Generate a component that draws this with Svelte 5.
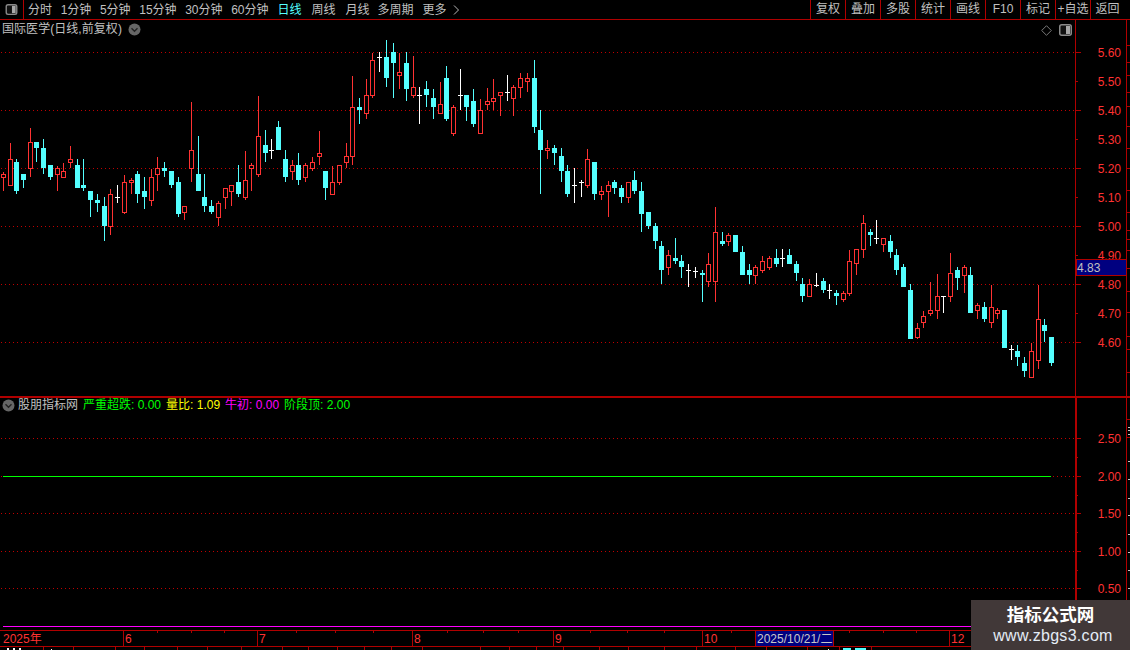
<script>
  const periods = [
    { label: '分时' }, { label: '1分钟', num: true }, { label: '5分钟', num: true }, { label: '15分钟', num: true },
    { label: '30分钟', num: true }, { label: '60分钟', num: true }, { label: '日线', active: true },
    { label: '周线', wide: true }, { label: '月线', wide: true }, { label: '多周期', tight: true }, { label: '更多' }
  ];
  const actions = ['复权','叠加','多股','统计','画线','F10','标记','+自选','返回'];

  // [x, high, bodyTop, bodyBottom, low, kind] in 3x crop units: r red, c cyan, w white doji
  const groups = [
    { ox: 0, oy: 90, rows: `10 r 247 252 263 303|31 r 159 207 288 288|49 c 207 216 303 312|70 c 252 252 270 294|91 r 114 156 237 261|109 c 156 156 174 216|130 c 147 174 234 252|151 c 225 225 261 270|172 r 228 234 255 303|190 r 219 243 264 264|211 r 168 207 219 234|232 c 207 225 294 294|250 c 207 285 294 303|271 c 303 303 330 381|292 c 312 330 339 366|313 c 321 348 408 453|331 r 297 312 411 435|352 w 285 322 322 339|373 r 255 276 369 372|394 r 264 270 279 312|412 c 243 252 312 339|433 c 261 303 321 357|454 r 237 261 333 348|472 r 201 234 255 303|493 c 216 234 243 261|514 c 243 243 285 294|535 c 261 276 372 381|553 r 348 348 369 390|574 r 36 180 237 276|595 c 138 252 303 303|613 c 252 321 348 366|634 c 330 348 366 372|655 r 333 339 384 408|676 r 294 294 324 357|694 r 285 285 306 348|715 c 225 276 312 321|736 r 183 270 324 330|754 r 219 225 237 303|775 r 18 138 255 261|796 c 120 165 189 216|814 w 147 181 181 207|835 c 93 111 180 180` },
    { ox: 280, oy: 30, rows: `16 c 360 387 441 456|37 r 390 405 426 450|55 c 369 405 450 465|76 r 399 405 444 456|97 r 381 396 417 423|118 r 303 369 381 405|136 c 423 423 474 510|157 r 408 456 495 495|178 r 405 405 459 465|199 r 339 378 399 414|217 r 138 231 381 405|238 c 204 231 240 282|259 r 147 195 252 267|277 r 69 90 198 204|298 w 66 82 82 126|319 c 30 81 144 171|340 c 39 66 99 204|358 r 69 126 138 177|379 c 66 99 177 213|400 r 78 171 198 204|418 w 171 196 196 282|439 c 153 177 195 231|460 c 177 204 231 267|481 r 156 222 252 252|499 c 108 144 267 273|520 r 225 231 312 318|541 w 117 196 196 240|559 c 195 195 231 273|580 c 177 213 282 291|601 r 207 240 312 312|622 r 174 213 225 240|640 r 147 204 216 240|661 r 186 186 198 258|682 w 135 187 187 213|700 r 165 171 207 258|721 r 129 144 174 204|742 r 129 144 156 186|763 c 90 144 291 309|781 c 240 300 360 492` },
    { ox: 530, oy: 130, rows: `52 r 30 54 63 87|73 c 45 54 69 105|94 c 54 78 123 156|112 c 105 123 192 201|133 w 114 166 166 219|154 w 150 157 157 201|172 r 57 87 168 174|193 c 96 96 192 210|214 r 168 183 195 210|235 r 153 165 186 261|253 c 150 156 174 192|274 c 165 174 201 219|295 r 156 156 204 219|313 c 123 150 183 192|334 c 156 183 252 306|355 c 246 246 288 297|376 c 279 288 333 357|394 c 333 348 420 462|415 r 360 375 414 435|436 c 324 384 393 402|454 c 375 393 411 444|475 w 402 421 421 471|496 w 411 423 423 444|517 c 420 429 435 516|535 r 369 402 456 471|556 r 231 306 456 516|577 c 306 333 342 348|595 r 309 315 336 348|616 c 315 315 366 366|637 c 348 366 435 435|658 c 402 420 435 462|676 r 405 411 438 462|697 r 378 393 423 429|718 r 378 384 414 420|739 c 357 384 402 411|757 w 357 385 385 411|778 c 357 375 402 402|799 c 393 402 429 453` },
    { ox: 780, oy: 200, rows: `67 c 234 252 288 306|88 r 237 252 291 291|109 w 219 255 255 261|130 c 234 243 270 279|148 w 252 270 270 297|169 c 270 279 288 315|190 r 273 279 300 306|208 r 150 183 282 288|229 r 147 147 192 225|250 r 45 69 150 174|271 c 87 96 105 138|289 w 60 115 115 132|310 r 114 114 135 156|331 c 105 123 156 174|349 c 147 165 210 225|370 c 192 201 261 261|391 c 252 270 417 417|412 r 369 384 414 417|430 r 333 348 369 384|451 r 246 330 342 348|472 r 222 288 333 357|490 w 288 288 288 339|511 r 159 219 291 306|532 c 201 210 234 270|553 r 195 201 228 279|571 c 201 225 339 339|592 r 309 315 333 357|613 c 306 321 357 366|634 r 255 321 369 384|652 r 324 330 342 357|673 c 330 330 444 444|694 w 435 447 447 480|712 c 435 453 471 498|733 c 471 489 513 531|754 r 429 453 534 534|775 r 255 357 483 507|793 c 357 375 393 426|814 c 411 411 489 498` }
  ];

  const candles = groups.flatMap(({ ox, oy, rows }) =>
    rows.split('|').map((row) => {
      const [z, kind, hi, top, bot, lo] = row.split(' ');
      const y = (v) => Math.round(oy + +v / 3);
      return { x: Math.floor(ox + +z / 3), kind, hi: y(hi), top: y(top), bot: y(bot), lo: y(lo) };
    })
  );

  const priceLabels = [
    ['5.60', 52, 1], ['5.50', 81, 0], ['5.40', 110, 1], ['5.30', 139, 0], ['5.20', 168, 1], ['5.10', 197, 0],
    ['5.00', 226, 1], ['4.90', 255, 0], ['4.80', 284, 1], ['4.70', 313, 0], ['4.60', 342, 1]
  ];
  const lowerLabels = [['2.50', 438], ['2.00', 476], ['1.50', 513], ['1.00', 551], ['0.50', 588]];
  const lowerMinor = [457, 495, 532, 570];
  const topStrip = [45, 62, 75, 92, 106, 126, 148, 168, 190, 212, 230, 239, 250, 268, 291, 312, 336, 349, 372];
  const lowerStrip = [427, 430, 434, 461, 479, 498, 515, 534, 552, 570, 588, 606];

  const timeMarks = [
    { x: 123, label: '6' }, { x: 257, label: '7' }, { x: 412, label: '8' },
    { x: 553, label: '9' }, { x: 702, label: '10' }, { x: 949, label: '12' }
  ];
  const timeTicks = [157, 191, 224, 296, 335, 373, 447, 483, 518, 590, 627, 664, 731, 849, 883, 916];
  const statusCells = [43, 73, 115, 144, 177, 207, 241, 282, 308, 337, 364, 391, 422, 480, 509, 536, 563, 599, 628, 664, 696, 735, 766, 807, 839, 871];
</script>

{#snippet chevronBadge()}
  <svg class="badge" width="13" height="13" viewBox="0 0 13 13" aria-hidden="true">
    <circle cx="6.5" cy="6.5" r="6" fill="#666" />
    <path d="M3.5 5.2 L6.5 8.2 L9.5 5.2" fill="none" stroke="#222" stroke-width="1.4" />
  </svg>
{/snippet}

{#snippet splitIcon(w, h)}
  <svg width={w} height={h} viewBox="0 0 13 12" aria-hidden="true">
    <rect x="0.75" y="0.75" width="11.5" height="10.5" rx="2" fill="#111" stroke="#8a8a8a" stroke-width="1.5" />
    <rect x="7" y="2" width="4" height="8" fill="#a8a8a8" />
  </svg>
{/snippet}

<div class="terminal">
  <header class="toolbar">
    <div class="toggle">{@render splitIcon(13, 11)}</div>
    <nav class="periods">
      {#each periods as p}
        <span class:active={p.active} class:num={p.num} class:wide={p.wide} class:tight={p.tight}>{p.label}</span>
      {/each}
      <svg class="more" width="7" height="12" viewBox="0 0 7 12" aria-hidden="true">
        <path d="M1 1.5 L5.5 6 L1 10.5" fill="none" stroke="#b8b8b8" stroke-width="1" />
      </svg>
    </nav>
    <div class="actions">
      {#each actions as a}<span>{a}</span>{/each}
    </div>
  </header>

  <section class="pane price-pane">
    <svg class="chart" width="1130" height="376" viewBox="0 20 1130 376" shape-rendering="crispEdges">
      {#each priceLabels.filter((l) => l[2]) as [, y]}
        <line class="grid" x1="1" x2="1075" y1={y + 0.5} y2={y + 0.5} />
      {/each}

      {#each candles as c}
        {#if c.kind === 'w'}
          <rect class="white" x={c.x} y={c.hi} width="1" height={c.lo - c.hi} />
          <rect class="white" x={c.x - 2} y={c.top} width="5" height="1" />
        {:else if c.kind === 'c'}
          <rect class="cyan" x={c.x} y={c.hi} width="1" height={c.lo - c.hi} />
          <rect class="cyan" x={c.x - 2} y={c.top} width="5" height={c.bot - c.top} />
        {:else}
          <rect class="red" x={c.x} y={c.hi} width="1" height={c.top - c.hi} />
          <rect class="red" x={c.x} y={c.bot} width="1" height={c.lo - c.bot} />
          <rect class="hollow" x={c.x - 1.5} y={c.top + 0.5} width="4" height={c.bot - c.top - 1} />
        {/if}
      {/each}

      <line class="axis" x1="1075.5" x2="1075.5" y1="20" y2="396" />
      <line class="axis" x1="1126.5" x2="1126.5" y1="20" y2="396" />
      {#each topStrip as y}
        <line class="axis" x1="1127" x2="1130" y1={y + 0.5} y2={y + 0.5} />
      {/each}
      {#each priceLabels as [label, y, major]}
        <line class="axis" x1="1076" x2={major ? 1081 : 1078} y1={y + 0.5} y2={y + 0.5} />
        <text class="scale" x="1121" y={y + 5}>{label}</text>
      {/each}

      <rect class="cursor" x="1076" y="259.5" width="50" height="16" />
      <text class="cursor-text" x="1077" y="272">4.83</text>
    </svg>

    <div class="title">国际医学(日线,前复权) {@render chevronBadge()}</div>
    <div class="tools">
      <svg width="11" height="11" viewBox="0 0 11 11" aria-hidden="true">
        <path d="M5.5 0.7 L10.3 5.5 L5.5 10.3 L0.7 5.5 Z" fill="none" stroke="#7a7a7a" />
      </svg>
      {@render splitIcon(13, 12)}
    </div>
  </section>

  <section class="pane lower-pane">
    <svg class="chart" width="1130" height="234" viewBox="0 396 1130 234" shape-rendering="crispEdges">
      <rect class="divider" x="0" y="396" width="1130" height="2" />
      {#each lowerLabels as [, y]}
        <line class="grid" x1="1" x2="1075" y1={y + 0.5} y2={y + 0.5} />
      {/each}
      <rect class="signal" x="3" y="476" width="1048" height="1" />
      <rect class="pulse" x="3" y="626" width="1127" height="1" />

      <rect class="divider" x="1075" y="396" width="2" height="234" />
      <line class="axis" x1="1126.5" x2="1126.5" y1="396" y2="630" />
      <line class="axis" x1="1127" x2="1130" y1="419.5" y2="419.5" />
      <line class="axis" x1="1127" x2="1130" y1="437.5" y2="437.5" />
      {#each lowerStrip as y}
        <line class="tick-white" x1="1128" x2="1130" y1={y + 0.5} y2={y + 0.5} />
      {/each}
      {#each lowerMinor as y}
        <line class="axis" x1="1077" x2="1078" y1={y + 0.5} y2={y + 0.5} />
      {/each}
      {#each lowerLabels as [label, y]}
        <line class="axis" x1="1077" x2="1081" y1={y + 0.5} y2={y + 0.5} />
        <text class="scale" x="1121" y={y + 5}>{label}</text>
      {/each}
    </svg>

    <div class="legend">
      {@render chevronBadge()}
      <span class="name">股朋指标网</span>
      <span class="green">严重超跌: 0.00</span>
      <span class="yellow">量比: 1.09</span>
      <span class="magenta">牛初: 0.00</span>
      <span class="green">阶段顶: 2.00</span>
    </div>
  </section>

  <svg class="timeline" width="1130" height="20" viewBox="0 630 1130 20" shape-rendering="crispEdges">
    <rect class="divider" x="0" y="630" width="1130" height="1" />
    <rect class="divider" x="0" y="646" width="1130" height="1" />
    {#each timeTicks as x}
      <rect class="divider" x={x} y="631" width="1" height="2" />
    {/each}
    <text class="time" x="3" y="643">2025年</text>
    {#each timeMarks as m}
      <rect class="divider" x={m.x} y="631" width="1" height="15" />
      <text class="time" x={m.x + 2} y="643">{m.label}</text>
    {/each}
    <rect class="date-box" x="755.5" y="630.5" width="78" height="16" />
    <text class="date" x="757" y="643">2025/10/21/二</text>
    {#each statusCells as x}
      <rect class="divider" x={x} y="647" width="1" height="3" />
    {/each}
    <rect class="tick-fill" x="7" y="648" width="2" height="2" />
    <rect class="tick-fill" x="13" y="648" width="2" height="2" />
    <rect class="tick-fill" x="19" y="648" width="2" height="2" />
    <rect class="tick-fill" x="51" y="649" width="1" height="1" />
    <rect class="tick-fill" x="828" y="649" width="1" height="1" />
    <rect class="cyan" x="843" y="648" width="8" height="2" />
    <rect class="cyan" x="855" y="648" width="11" height="2" />
  </svg>

  <aside class="watermark">
    <strong>指标公式网</strong>
    <span>www.zbgs3.com</span>
  </aside>
</div>

<style>
  :global(body) {
    margin: 0;
    background: #000;
  }

  .terminal {
    position: relative;
    width: 1130px;
    height: 650px;
    overflow: hidden;
    background: #000;
    color: #c0c0c0;
    font: 12px/16px "Liberation Sans", "Noto Sans CJK SC", sans-serif;
  }

  .toolbar {
    display: flex;
    height: 19px;
    border-bottom: 1px solid #b00000;
  }

  .toggle {
    display: flex;
    align-items: center;
    justify-content: center;
    box-sizing: border-box;
    width: 24px;
    padding-right: 1px;
    border-right: 1px solid #b00000;
  }

  .periods {
    display: flex;
    align-items: center;
    gap: 9px;
    padding-left: 4px;
  }

  .periods .active {
    color: #54ffff;
  }

  .periods .num {
    margin-left: -0.4px;
  }

  .periods .wide {
    margin-left: 1px;
  }

  .periods .tight {
    margin-left: -1px;
  }

  .more {
    margin-left: -3px;
  }

  .actions {
    display: flex;
    margin-left: auto;
    width: 320px;
  }

  .actions span {
    box-sizing: border-box;
    width: 35px;
    border-left: 1px solid #b00000;
    text-align: center;
    line-height: 19px;
    white-space: nowrap;
  }

  .actions span:last-child {
    width: 40px;
    padding-right: 6px;
  }

  .pane {
    position: relative;
  }

  .price-pane {
    height: 376px;
  }

  .lower-pane {
    height: 234px;
  }

  .chart,
  .timeline {
    display: block;
  }

  .title {
    position: absolute;
    top: 1px;
    left: 2px;
    display: flex;
    align-items: center;
    gap: 6px;
    line-height: 16px;
    letter-spacing: 0.05px;
  }

  .badge {
    display: block;
    flex: none;
  }

  .tools {
    position: absolute;
    top: 4px;
    right: 58px;
    display: flex;
    align-items: center;
    gap: 7px;
  }

  .tools svg {
    display: block;
  }

  .legend {
    position: absolute;
    top: 1px;
    left: 2px;
    display: flex;
    align-items: center;
    gap: 5px;
    line-height: 16px;
  }

  .legend .name {
    margin-left: -2px;
  }

  .green { color: #00ff00; }
  .yellow { color: #ffff00; }
  .magenta { color: #ff00ff; }

  .grid {
    stroke: #c00000;
    stroke-width: 1;
    stroke-dasharray: 1 3;
  }

  .axis {
    stroke: #b00000;
    stroke-width: 1;
  }

  .divider {
    fill: #b00000;
  }

  .tick-white {
    stroke: #c8c8c8;
    stroke-width: 1;
  }

  .tick-fill,
  .white {
    fill: #fff;
  }

  .cyan {
    fill: #54ffff;
  }

  .red {
    fill: #ff3232;
  }

  .hollow {
    fill: #000;
    stroke: #ff3232;
    stroke-width: 1;
  }

  .signal {
    fill: #00ff00;
  }

  .pulse {
    fill: #ff00ff;
  }

  .scale {
    fill: #ff3232;
    font: 12px "Liberation Sans", sans-serif;
    text-anchor: end;
  }

  .cursor {
    fill: #000080;
    stroke: #b00000;
    stroke-width: 1;
  }

  .cursor-text {
    fill: #c0c0c0;
    font: 12px "Liberation Sans", sans-serif;
  }

  .time {
    fill: #ff3232;
    font: 12px "Liberation Sans", "Noto Sans CJK SC", sans-serif;
  }

  .date-box {
    fill: #000080;
    stroke: #b00000;
    stroke-width: 1;
  }

  .date {
    fill: #c8c8c8;
    font: 12px "Liberation Sans", "Noto Sans CJK SC", sans-serif;
  }

  .watermark {
    position: absolute;
    top: 600px;
    left: 971px;
    box-sizing: border-box;
    width: 159px;
    height: 50px;
    padding-top: 2px;
    background: #413838;
    display: flex;
    flex-direction: column;
    align-items: center;
  }

  .watermark strong {
    color: #fff;
    font: 700 17.5px/24px "Noto Sans CJK SC", sans-serif;
  }

  .watermark span {
    margin-left: 5px;
    color: #e4ecf6;
    font: 16px/20px "Liberation Sans", sans-serif;
    letter-spacing: 0.3px;
  }
</style>
